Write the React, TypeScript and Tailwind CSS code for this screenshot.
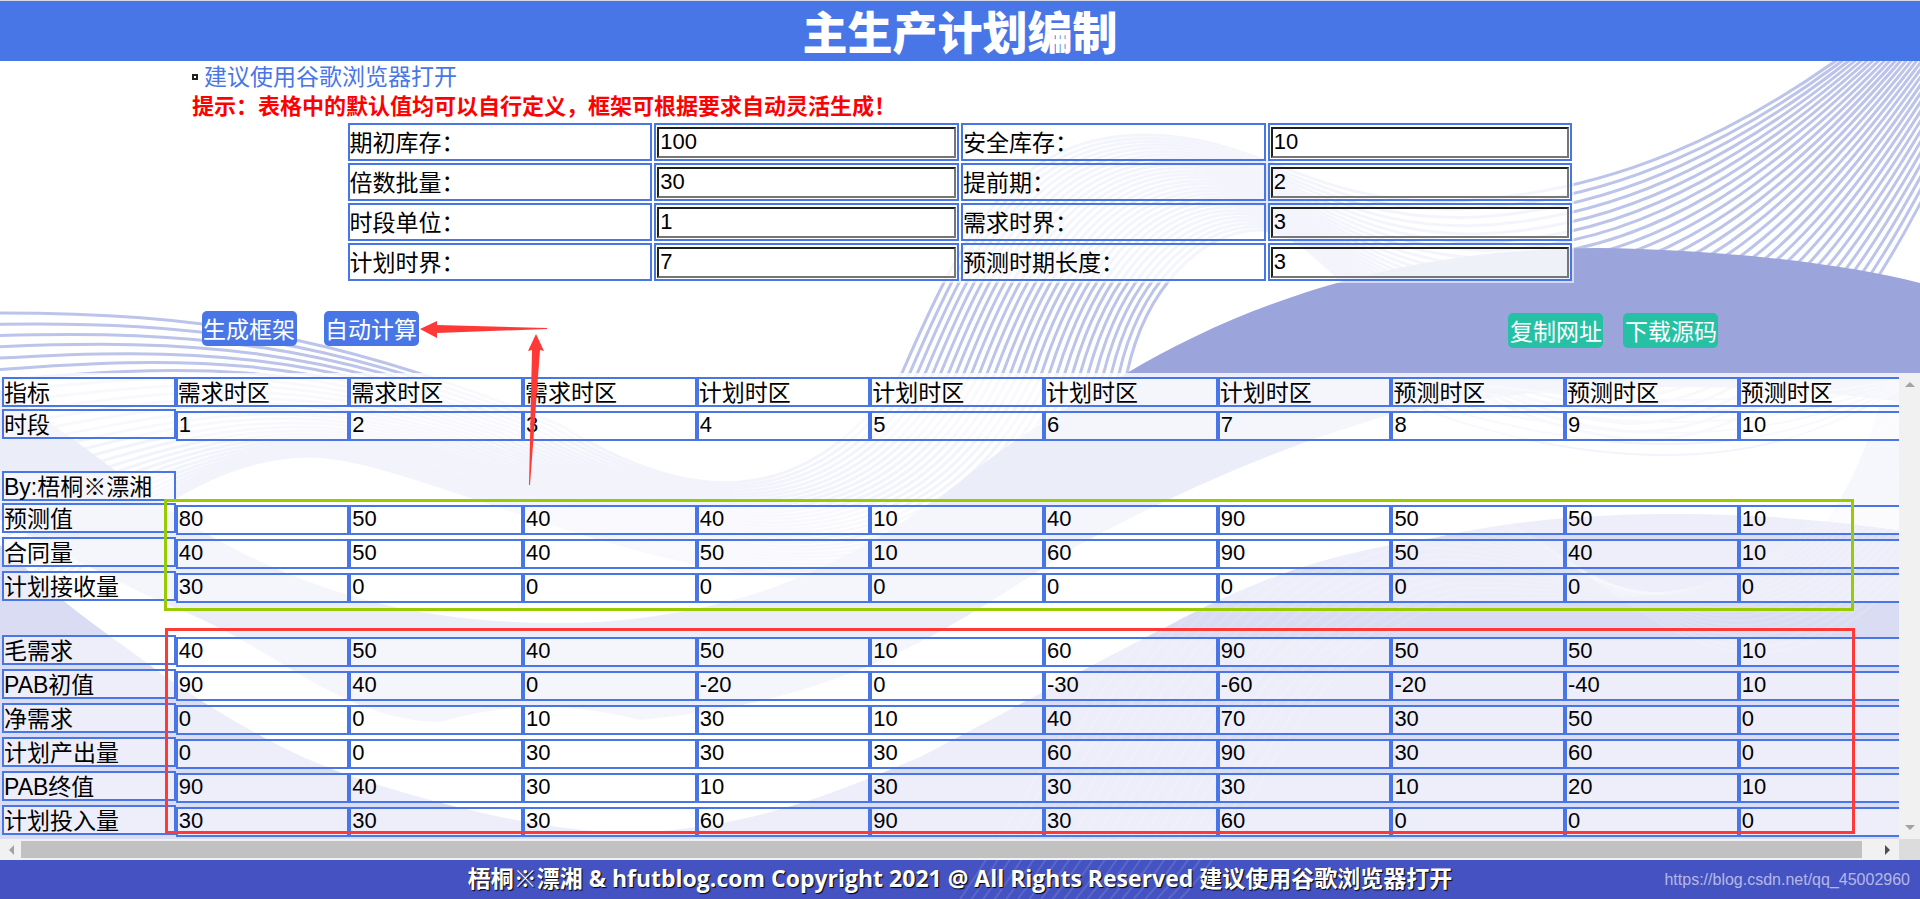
import { useState } from 'react';

/**
 * Master production schedule (MPS) page: parameters on top, generated grid below.
 */

type Point = [number, number];

const PARAMS = [
  [
    { id: 'stock', label: '期初库存：', value: '100' },
    { id: 'safety', label: '安全库存：', value: '10' },
  ],
  [
    { id: 'batch', label: '倍数批量：', value: '30' },
    { id: 'lead', label: '提前期：', value: '2' },
  ],
  [
    { id: 'unit', label: '时段单位：', value: '1' },
    { id: 'demandFence', label: '需求时界：', value: '3' },
  ],
  [
    { id: 'planFence', label: '计划时界：', value: '7' },
    { id: 'forecastLen', label: '预测时期长度：', value: '3' },
  ],
];

const ZONES = [
  '需求时区', '需求时区', '需求时区',
  '计划时区', '计划时区', '计划时区', '计划时区',
  '预测时区', '预测时区', '预测时区',
];

const PERIOD_ROWS = [{ label: '时段', values: [1, 2, 3, 4, 5, 6, 7, 8, 9, 10] }];

const INPUT_ROWS = [
  { label: '预测值', values: [80, 50, 40, 40, 10, 40, 90, 50, 50, 10] },
  { label: '合同量', values: [40, 50, 40, 50, 10, 60, 90, 50, 40, 10] },
  { label: '计划接收量', values: [30, 0, 0, 0, 0, 0, 0, 0, 0, 0] },
];

const RESULT_ROWS = [
  { label: '毛需求', values: [40, 50, 40, 50, 10, 60, 90, 50, 50, 10] },
  { label: 'PAB初值', values: [90, 40, 0, -20, 0, -30, -60, -20, -40, 10] },
  { label: '净需求', values: [0, 0, 10, 30, 10, 40, 70, 30, 50, 0] },
  { label: '计划产出量', values: [0, 0, 30, 30, 30, 60, 90, 30, 60, 0] },
  { label: 'PAB终值', values: [90, 40, 30, 10, 30, 30, 30, 10, 20, 10] },
  { label: '计划投入量', values: [30, 30, 30, 60, 90, 30, 60, 0, 0, 0] },
];

// Each ribbon is a start point followed by cubic segments (3 points each).
const RIBBON_OUTER: Point[] = [
  [0, 313], [200, 313], [340, 335], [560, 425],
  [680, 500], [800, 520], [902, 373],
  [960, 240], [1010, 135], [1145, 135],
  [1260, 135], [1310, 205], [1450, 201],
  [1600, 196], [1740, 140], [1890, 20],
];

const RIBBON_INNER: Point[] = [
  [0, 640], [90, 560], [190, 456], [310, 456],
  [470, 456], [960, 780], [1127, 373],
  [1145, 290], [1200, 230], [1260, 230],
  [1340, 230], [1400, 420], [1640, 440],
  [1820, 440], [1900, 250], [2010, 20],
];

const SIDE_OUTER: Point[] = [
  [1400, 400], [1460, 425], [1560, 455], [1663, 455],
  [1780, 455], [1840, 420], [1900, 390],
];

const SIDE_INNER: Point[] = [
  [1420, 380], [1500, 385], [1580, 400], [1680, 400],
  [1780, 400], [1840, 390], [1900, 380],
];

const DEEP_OUTER: Point[] = [
  [960, 899], [1060, 760], [1150, 500], [1400, 490],
  [1600, 500], [1700, 800], [1920, 560],
];

const DEEP_INNER: Point[] = [
  [1180, 899], [1260, 820], [1300, 640], [1460, 600],
  [1640, 590], [1780, 640], [1900, 390],
];

function ribbon(a: Point[], b: Point[], count: number) {
  return Array.from({ length: count }, (_, i) => {
    const t = i / (count - 1);
    const pts = a.map(([x, y], j) => `${(x + (b[j][0] - x) * t).toFixed(1)} ${(y + (b[j][1] - y) * t).toFixed(1)}`);
    return `M${pts[0]}C${pts.slice(1).join(' ')}`;
  });
}

function Backdrop() {
  return (
    <svg
      className="absolute inset-0 -z-10 h-full w-full"
      viewBox="0 0 1920 899"
      preserveAspectRatio="none"
      aria-hidden="true"
    >
      <g fill="none" stroke="#bcc4ea" strokeWidth="3">
        {ribbon(RIBBON_OUTER, RIBBON_INNER, 30).map((d) => <path key={d} d={d} />)}
      </g>
      <path
        fill="#9ba5dc"
        d="M0 390C60 425 150 500 200 530C330 605 450 628 600 622C760 610 850 560 946 493C1010 440 1070 405 1127 373C1250 300 1420 240 1640 249C1750 253 1850 265 1920 283V405C1760 380 1560 380 1400 412C1300 440 1200 480 1079 545C960 620 860 700 640 720C560 700 500 705 440 722C340 720 280 650 180 610C110 580 50 545 0 520Z"
      />
      <g fill="none" stroke="#bcc4ea" strokeWidth="2">
        {ribbon(SIDE_OUTER, SIDE_INNER, 6).map((d) => <path key={d} d={d} />)}
      </g>
      <path fill="#a5aee0" opacity="0.5" d="M1880 405L1920 395V600H1740C1810 560 1850 500 1880 405Z" />
      <path
        fill="#4452c2"
        d="M0 545C30 570 45 590 65 602C100 630 130 650 163 675C220 715 280 750 347 775C440 805 540 832 637 833C760 825 830 795 920 757C1030 700 1100 660 1170 625C1270 570 1350 550 1433 538C1520 518 1600 514 1683 514C1760 514 1850 522 1920 534V899H0Z"
      />
      <g fill="none" stroke="#ffffff" strokeOpacity="0.12" strokeWidth="2">
        {ribbon(DEEP_OUTER, DEEP_INNER, 20).map((d) => <path key={d} d={d} />)}
      </g>
    </svg>
  );
}

function ParamTable() {
  return (
    <table className="mx-auto w-[64%] table-fixed border-separate border-spacing-[2px] bg-white/60">
      <tbody>
        {PARAMS.map((row) => (
          <tr key={row[0].id}>
            {row.flatMap((p) => [
              <td key={`${p.id}-label`} className="h-[38px] border-2 border-[#4976e6] bg-white/60 p-0 pt-0.5 text-[23px] leading-8">
                <label htmlFor={p.id}>{p.label}</label>
              </td>,
              <td key={p.id} className="h-[38px] border-2 border-[#4976e6] bg-white/60 p-px">
                <input
                  id={p.id}
                  defaultValue={p.value}
                  className="block h-[31px] w-full border-2 border-t-[#212121] border-r-[#767676] border-b-[#767676] border-l-[#212121] bg-transparent px-px text-[22px] leading-6 outline-none"
                />
              </td>,
            ])}
          </tr>
        ))}
      </tbody>
    </table>
  );
}

const BOX = 'border-2 border-[#4976e6] bg-white/50';

function LabelCell({ text }: { text: string }) {
  return (
    <th scope="row" className="p-0 text-left align-top font-normal">
      <div className={`${BOX} h-[30px] text-[23px] leading-7`}>{text}</div>
    </th>
  );
}

function DataRow({ label, values }: { label: string; values: number[] }) {
  return (
    <tr className="h-8">
      <LabelCell text={label} />
      {values.map((v, i) => (
        <td key={i} className="p-0 pt-0.5 align-top">
          <input
            aria-label={`${label} ${i + 1}`}
            defaultValue={v}
            className={`${BOX} block h-[30px] w-full p-px pb-1 leading-6 outline-none`}
          />
        </td>
      ))}
    </tr>
  );
}

function ScheduleTable() {
  return (
    <table className="ml-0.5 w-[100.6%] table-fixed border-separate border-spacing-x-0 border-spacing-y-[2px] pt-0.5 text-[22px]">
      <thead>
        <tr>
          {['指标', ...ZONES].map((zone, i) => (
            <th key={i} scope="col" className="p-0 text-left font-normal">
              <div className={`${BOX} h-[30px] text-[23px] leading-7`}>{zone}</div>
            </th>
          ))}
        </tr>
      </thead>
      <tbody>
        {PERIOD_ROWS.map((row) => <DataRow key={row.label} {...row} />)}
        <tr><td colSpan={11} className="h-[26px] p-0" /></tr>
        <tr><LabelCell text="By:梧桐※漂湘" /></tr>
        {INPUT_ROWS.map((row) => <DataRow key={row.label} {...row} />)}
        <tr><td colSpan={11} className="h-7 p-0" /></tr>
        {RESULT_ROWS.map((row) => <DataRow key={row.label} {...row} />)}
      </tbody>
    </table>
  );
}

function VerticalBar() {
  return (
    <div className="flex w-[21px] shrink-0 flex-col items-center justify-between bg-[#f1f1f1] py-2" aria-hidden="true">
      <svg className="h-[6px] w-[10px]" viewBox="0 0 10 6"><path d="M0 6L5 1L10 6Z" fill="#a3a3a3" /></svg>
      <svg className="h-[6px] w-[10px]" viewBox="0 0 10 6"><path d="M0 0L5 5L10 0Z" fill="#a3a3a3" /></svg>
    </div>
  );
}

function HorizontalBar() {
  return (
    <div className="flex h-[21px]" aria-hidden="true">
      <div className="flex flex-1 items-center bg-[#f1f1f1]">
        <div className="flex w-[21px] justify-center">
          <svg className="h-[10px] w-[6px]" viewBox="0 0 6 10"><path d="M6 0L1 5L6 10Z" fill="#a3a3a3" /></svg>
        </div>
        <div className="h-[17px] flex-1 bg-[#c1c1c1]" />
        <div className="flex w-[37px] justify-end pr-2">
          <svg className="h-[10px] w-[6px]" viewBox="0 0 6 10"><path d="M0 0L5 5L0 10Z" fill="#505050" /></svg>
        </div>
      </div>
      <div className="w-[21px] bg-[#dcdcdc]" />
    </div>
  );
}

export default function App() {
  const [copied, setCopied] = useState(false);

  return (
    <main className="relative isolate flex min-h-screen flex-col overflow-hidden bg-white font-['Liberation_Sans','Noto_Sans_CJK_SC',sans-serif] text-black">
      <Backdrop />

      <header className="border-t border-[#d5d9e3] bg-[#4976e6] pt-2">
        <h1 className="text-center text-[45px] leading-[52px] font-black text-white">主生产计划编制</h1>
      </header>

      <section className="px-[10%] pt-px leading-[30px]">
        <p className="flex items-center gap-[6px] text-[23px] text-[#4976e6]">
          <span className="h-[6px] w-[6px] border-2 border-[#222222]" />
          <a href="#browser">建议使用谷歌浏览器打开</a>
        </p>
        <p className="text-[22px] leading-[29px] font-bold text-[#ff0000]">
          提示：表格中的默认值均可以自行定义，框架可根据要求自动灵活生成！
        </p>
      </section>

      <ParamTable />

      <section className="relative flex justify-between px-[10.5%] pt-7 pb-[25px] text-[23px] leading-[35px] text-white">
        <div className="flex gap-[27px]">
          <button type="button" className="h-[35px] w-[95px] rounded-[5px] bg-[#4976e6] pt-0.5">生成框架</button>
          <button type="button" className="h-[35px] w-[95px] rounded-[5px] bg-[#4976e6] pt-0.5">自动计算</button>
        </div>
        <div className="flex gap-5 pt-0.5">
          <button
            type="button"
            aria-pressed={copied}
            onClick={() => setCopied(true)}
            className="h-[35px] w-[95px] rounded-[5px] bg-[#26c1a5] pt-0.5"
          >
            复制网址
          </button>
          <button type="button" className="h-[35px] w-[95px] rounded-[5px] bg-[#26c1a5] pt-0.5">下载源码</button>
        </div>
        {/* Hand-drawn pointers to the calculate button */}
        <svg className="pointer-events-none absolute top-7 left-[420px] z-10 h-44 w-32" viewBox="0 0 128 176" aria-hidden="true">
          <path d="M0 18L17 10L17 14L127 17L127 18L17 22L17 27Z" fill="#ff3936" />
          <path d="M116 23L124 40L120 39L110 174L109 174L112 39L108 40Z" fill="#ff3936" />
        </svg>
      </section>

      <section className="relative flex flex-col">
        <div className="flex">
          <div className="min-w-0 flex-1 overflow-hidden bg-white/80">
            <ScheduleTable />
          </div>
          <VerticalBar />
        </div>
        <HorizontalBar />
        <div className="pointer-events-none absolute top-[126px] right-[66px] left-[164px] h-[112px] border-[3px] border-[#99cc00]" />
        <div className="pointer-events-none absolute top-[255px] right-[65px] left-[165px] h-[206px] border-[3px] border-[#ff3936]" />
      </section>

      <footer className="relative">
        <p className="pb-[3px] text-center font-['Open_Sans','Noto_Sans_CJK_SC',sans-serif] text-[23px] leading-9 font-bold text-white [text-shadow:1px_1px_1px_#000]">
          梧桐※漂湘 &amp; hfutblog.com Copyright 2021 @ All Rights Reserved 建议使用谷歌浏览器打开
        </p>
        <a
          href="#blog"
          className="absolute top-2 right-[10px] text-base leading-6 text-white/60"
        >
          https://blog.csdn.net/qq_45002960
        </a>
      </footer>
    </main>
  );
}
